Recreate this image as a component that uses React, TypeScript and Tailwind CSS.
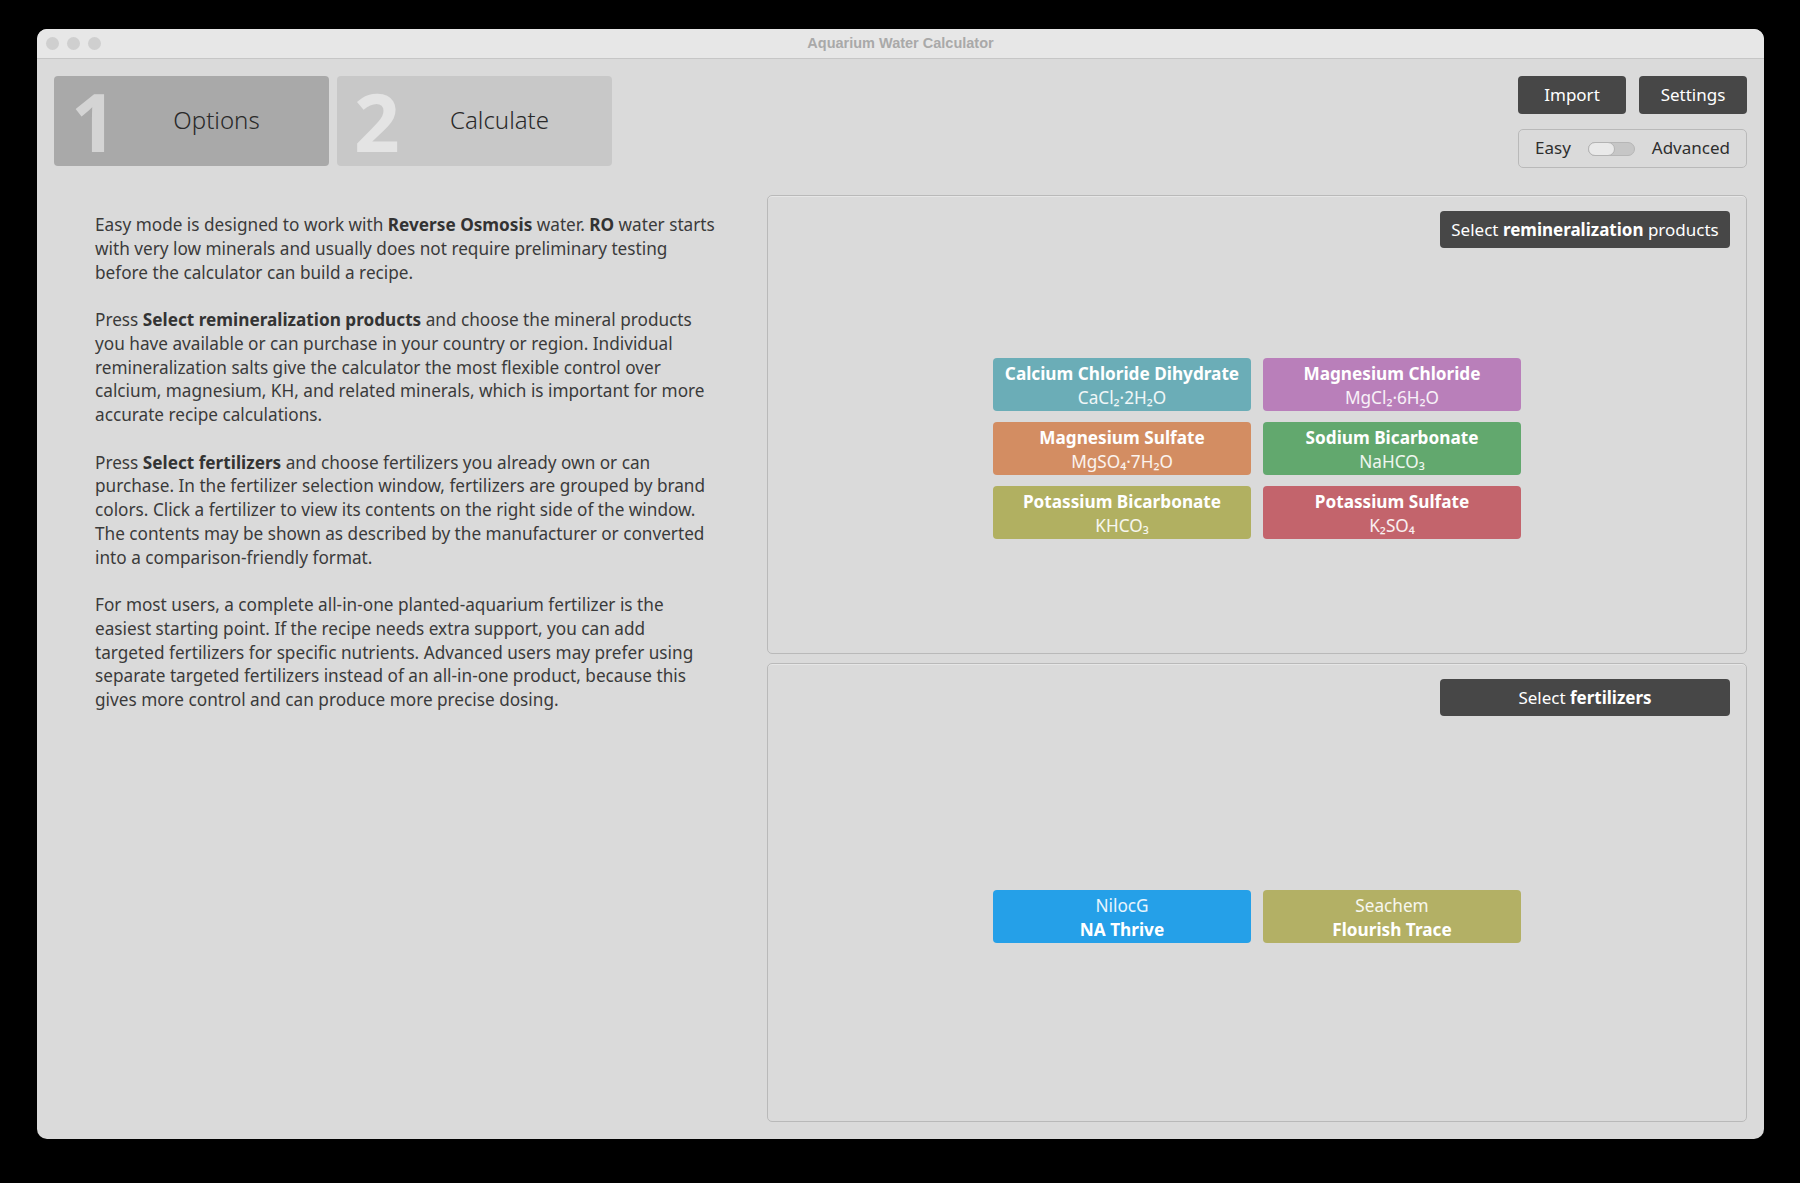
import React from "react";

type Chip = { name: string; formula: string; color: string };

const minerals: Chip[] = [
  { name: "Calcium Chloride Dihydrate", formula: "CaCl₂·2H₂O", color: "bg-[#6badb7]" },
  { name: "Magnesium Chloride", formula: "MgCl₂·6H₂O", color: "bg-[#b97fba]" },
  { name: "Magnesium Sulfate", formula: "MgSO₄·7H₂O", color: "bg-[#d38d62]" },
  { name: "Sodium Bicarbonate", formula: "NaHCO₃", color: "bg-[#62a86e]" },
  { name: "Potassium Bicarbonate", formula: "KHCO₃", color: "bg-[#b1b061]" },
  { name: "Potassium Sulfate", formula: "K₂SO₄", color: "bg-[#c3646c]" },
];

const ferts = [
  { brand: "NilocG", name: "NA Thrive", color: "bg-[#25a0e8]" },
  { brand: "Seachem", name: "Flourish Trace", color: "bg-[#b3b065]" },
];

function Panel({ title, children }: { title: React.ReactNode; children: React.ReactNode }) {
  return (
    <div className="flex-1 flex flex-col border border-[#b9b9b9] rounded-[5px] pt-[15px] px-[16px] pb-[5px] shadow-[inset_0_1px_0_#e6e6e6]">
      <div className="flex justify-end">
        <button className="w-[290px] h-[37px] rounded-[4px] bg-[#474747] text-white text-[17px] flex items-center justify-center">
          {title}
        </button>
      </div>
      <div className="flex-1 flex items-center justify-center">{children}</div>
    </div>
  );
}

export default function App() {
  return (
    <div className="w-[1800px] h-[1183px] bg-black pt-[29px] pl-[37px] font-['Noto_Sans',sans-serif]">
      <div className="w-[1727px] h-[1110px] rounded-[10px] bg-[#dadada] overflow-hidden flex flex-col">
        {/* title bar */}
        <div className="relative h-[30px] bg-[#e7e7e7] border-b border-[#c6c6c6] flex items-center px-[9px] gap-[8px]">
          <span className="w-[13px] h-[13px] rounded-full bg-[#cfcfcf]" />
          <span className="w-[13px] h-[13px] rounded-full bg-[#cfcfcf]" />
          <span className="w-[13px] h-[13px] rounded-full bg-[#cfcfcf]" />
          <div className="absolute inset-0 flex items-center justify-center text-[14.5px] font-bold text-[#a9a9a9] font-['Liberation_Sans',Arial,sans-serif]">
            Aquarium Water Calculator
          </div>
        </div>

        {/* body */}
        <div className="flex-1 flex p-[17px] gap-[13px]">
          {/* left column */}
          <div className="w-[700px] flex flex-col">
            <div className="flex gap-[8px]">
              <div className="w-[275px] h-[90px] rounded-[4px] bg-[#a9a9a9] flex items-center">
                <span className="w-[50px] pl-[17px] text-[80px] leading-none font-bold text-white/50">1</span>
                <span className="flex-1 text-center text-[24px] font-light text-[#2a2a2a] -mt-[2px]">Options</span>
              </div>
              <div className="w-[275px] h-[90px] rounded-[4px] bg-[#c8c8c8] flex items-center">
                <span className="w-[50px] pl-[17px] text-[80px] leading-none font-bold text-white/50">2</span>
                <span className="flex-1 text-center text-[24px] font-light text-[#2a2a2a] -mt-[2px]">Calculate</span>
              </div>
            </div>

            <div className="mt-[47px] pl-[41px] text-[17.2px] leading-[23.75px] text-[#3a3a3a] whitespace-nowrap flex flex-col gap-[23.75px]">
              <p>
                Easy mode is designed to work with <b className="text-[#333]">Reverse Osmosis</b> water. <b className="text-[#333]">RO</b> water starts
                <br />
                with very low minerals and usually does not require preliminary testing
                <br />
                before the calculator can build a recipe.
              </p>
              <p>
                Press <b className="text-[#333]">Select remineralization products</b> and choose the mineral products
                <br />
                you have available or can purchase in your country or region. Individual
                <br />
                remineralization salts give the calculator the most flexible control over
                <br />
                calcium, magnesium, KH, and related minerals, which is important for more
                <br />
                accurate recipe calculations.
              </p>
              <p>
                Press <b className="text-[#333]">Select fertilizers</b> and choose fertilizers you already own or can
                <br />
                purchase. In the fertilizer selection window, fertilizers are grouped by brand
                <br />
                colors. Click a fertilizer to view its contents on the right side of the window.
                <br />
                The contents may be shown as described by the manufacturer or converted
                <br />
                into a comparison-friendly format.
              </p>
              <p>
                For most users, a complete all-in-one planted-aquarium fertilizer is the
                <br />
                easiest starting point. If the recipe needs extra support, you can add
                <br />
                targeted fertilizers for specific nutrients. Advanced users may prefer using
                <br />
                separate targeted fertilizers instead of an all-in-one product, because this
                <br />
                gives more control and can produce more precise dosing.
              </p>
            </div>
          </div>

          {/* right column */}
          <div className="flex-1 flex flex-col">
            <div className="flex flex-col items-end gap-[15px]">
              <div className="flex gap-[13px]">
                <button className="w-[108px] h-[38px] rounded-[4px] bg-[#474747] text-white text-[17px]">Import</button>
                <button className="w-[108px] h-[38px] rounded-[4px] bg-[#474747] text-white text-[17px]">Settings</button>
              </div>
              <div className="w-[229px] h-[39px] rounded-[5px] border border-[#b9b9b9] flex items-center justify-between px-[16px] text-[17px] text-[#2e2e2e]">
                <span className="-mt-[1px]">Easy</span>
                <span className="relative w-[47px] h-[14px] rounded-full bg-[#c6c6c6] border border-[#b6b6b6]">
                  <span className="absolute left-[-1px] top-[-1px] w-[27px] h-[14px] rounded-full bg-[#e9e9e9] border border-[#b3b3b3]" />
                </span>
                <span className="-mt-[1px]">Advanced</span>
              </div>
            </div>

            <div className="mt-[27px] flex-1 flex flex-col gap-[9px]">
              <Panel
                title={
                  <span>
                    Select <b>remineralization</b> products
                  </span>
                }
              >
                <div className="grid grid-cols-[258px_258px] gap-x-[12px] gap-y-[11px]">
                  {minerals.map((m) => (
                    <div
                      key={m.name}
                      className={`${m.color} h-[53px] pt-[3px] rounded-[4px] flex flex-col items-center justify-center text-white text-[17.2px] leading-[24px]`}
                    >
                      <span className="font-bold">{m.name}</span>
                      <span className="text-white/90">{m.formula}</span>
                    </div>
                  ))}
                </div>
              </Panel>
              <Panel
                title={
                  <span>
                    Select <b>fertilizers</b>
                  </span>
                }
              >
                <div className="grid grid-cols-[258px_258px] gap-x-[12px]">
                  {ferts.map((f) => (
                    <div
                      key={f.name}
                      className={`${f.color} h-[53px] pt-[3px] rounded-[4px] flex flex-col items-center justify-center text-white text-[17.2px] leading-[24px]`}
                    >
                      <span className="text-white/90">{f.brand}</span>
                      <span className="font-bold">{f.name}</span>
                    </div>
                  ))}
                </div>
              </Panel>
            </div>
          </div>
        </div>
      </div>
    </div>
  );
}
